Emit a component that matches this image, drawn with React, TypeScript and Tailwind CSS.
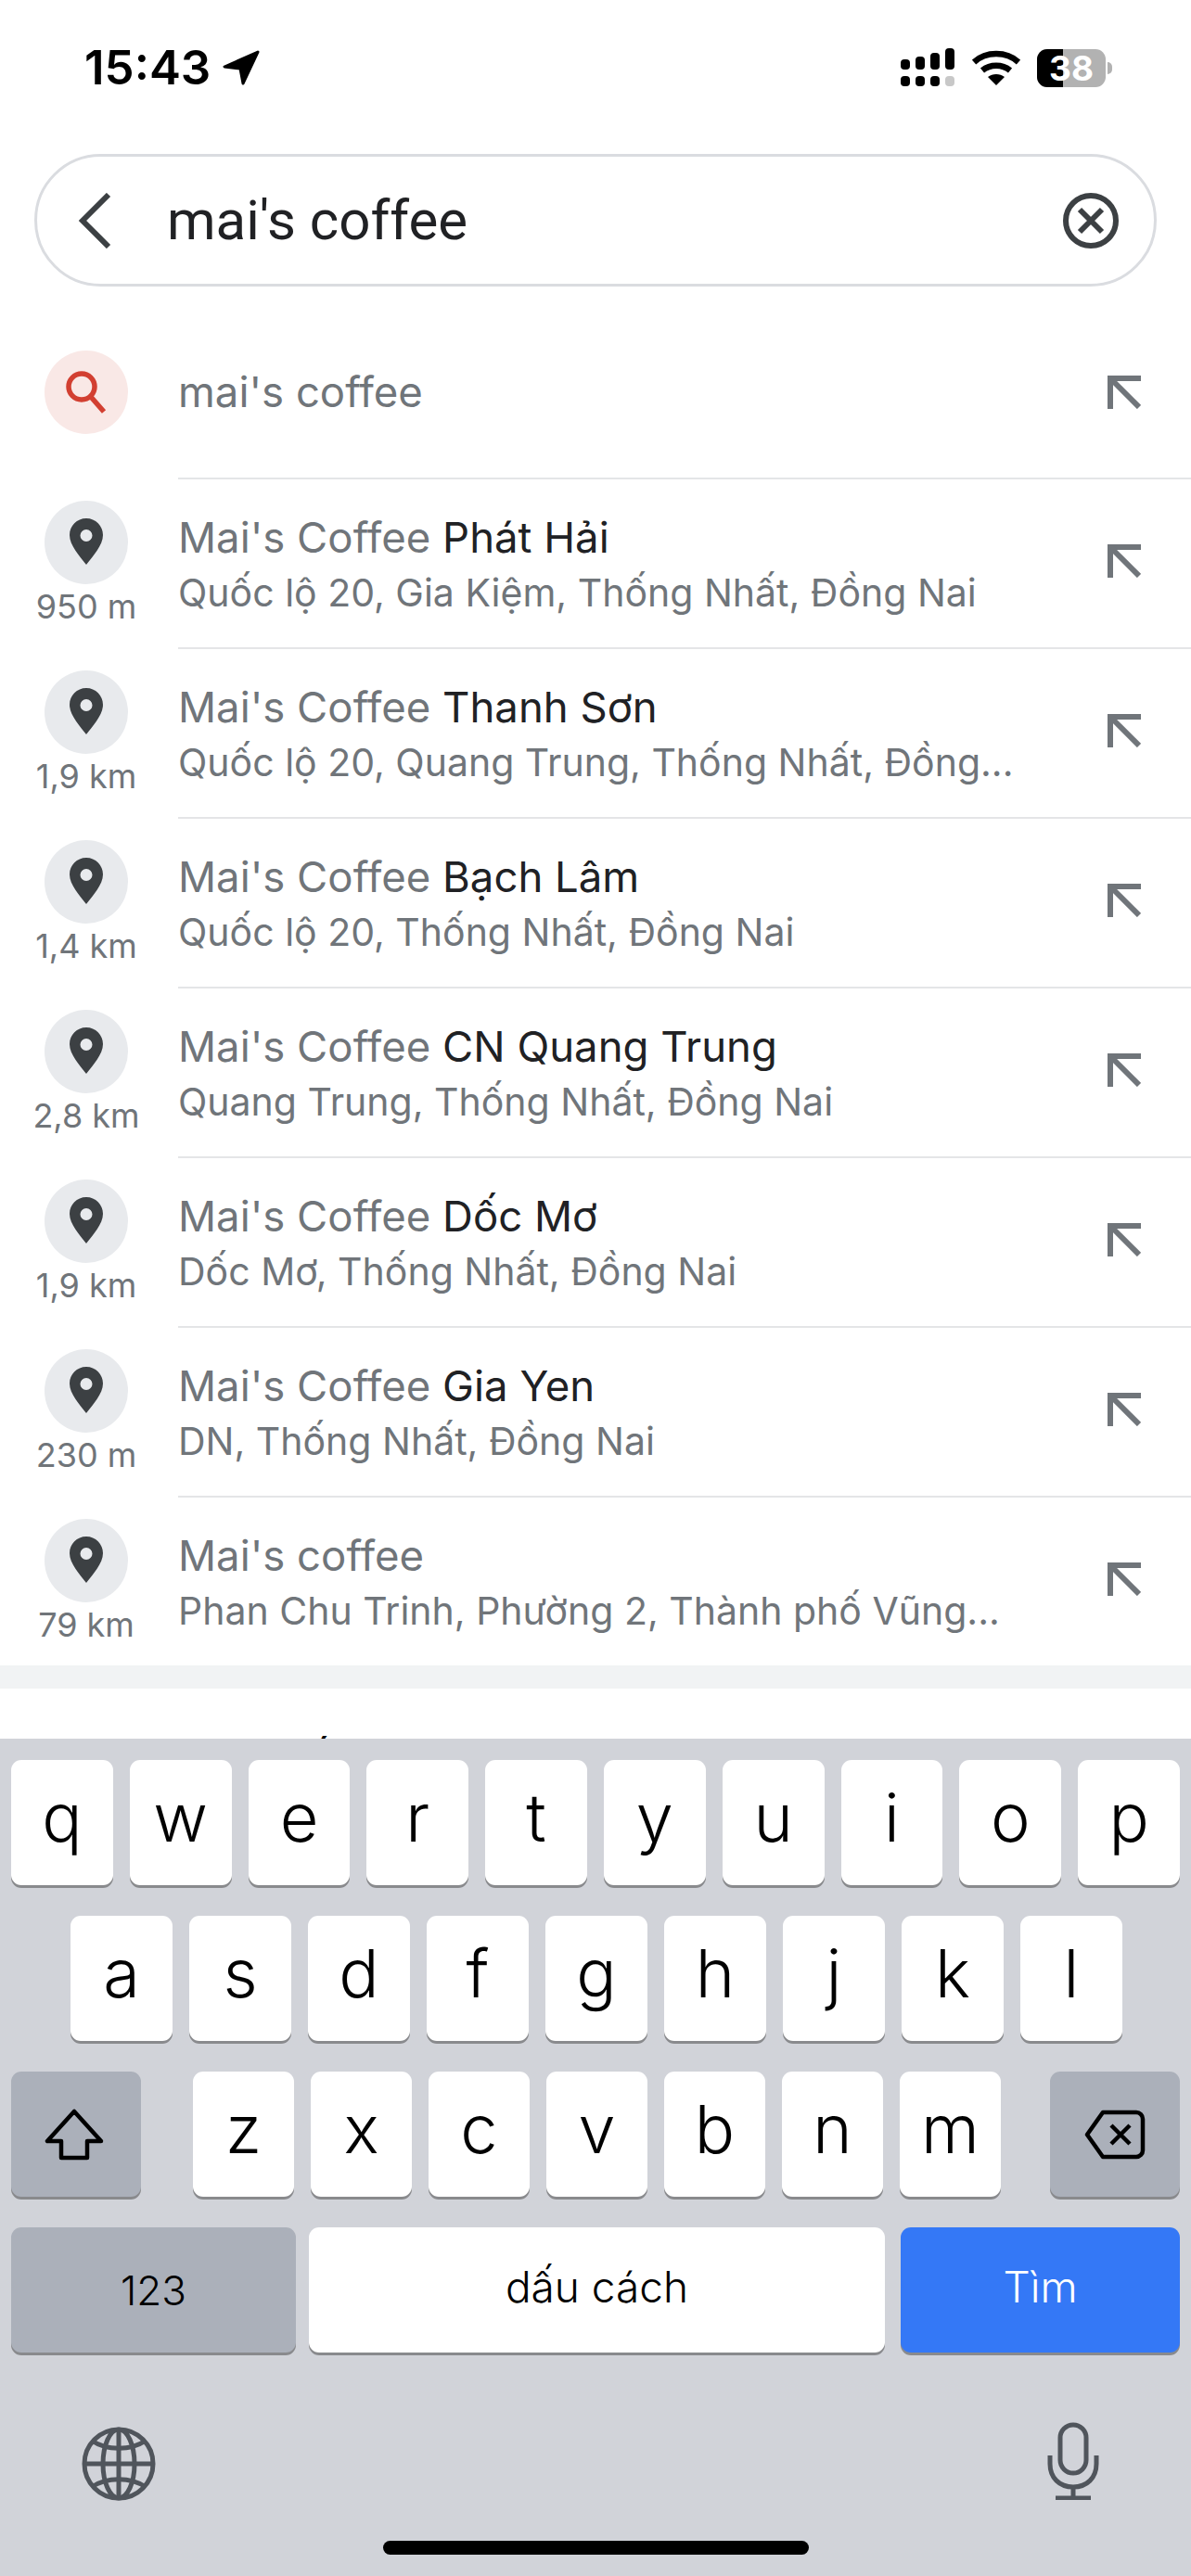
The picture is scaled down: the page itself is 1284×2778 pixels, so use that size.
const results = [
  { name: "Phát Hải", address: "Quốc lộ 20, Gia Kiệm, Thống Nhất, Đồng Nai", distance: "950 m" },
  { name: "Thanh Sơn", address: "Quốc lộ 20, Quang Trung, Thống Nhất, Đồng...", distance: "1,9 km" },
  { name: "Bạch Lâm", address: "Quốc lộ 20, Thống Nhất, Đồng Nai", distance: "1,4 km" },
  { name: "CN Quang Trung", address: "Quang Trung, Thống Nhất, Đồng Nai", distance: "2,8 km" },
  { name: "Dốc Mơ", address: "Dốc Mơ, Thống Nhất, Đồng Nai", distance: "1,9 km" },
  { name: "Gia Yen", address: "DN, Thống Nhất, Đồng Nai", distance: "230 m" },
  { name: "", address: "Phan Chu Trinh, Phường 2, Thành phố Vũng...", distance: "79 km" },
]

const rowOne = ["q", "w", "e", "r", "t", "y", "u", "i", "o", "p"]
const rowTwo = ["a", "s", "d", "f", "g", "h", "j", "k", "l"]
const rowThree = ["z", "x", "c", "v", "b", "n", "m"]

const keyShadow = "shadow-[0_3px_0_#898a8d]"

const FillArrow = () => (
  <svg width="36" height="36" viewBox="0 0 36 36" fill="none" stroke="#70757a" strokeWidth="6">
    <path d="M3 36V3h33" />
    <path d="M4 4l30 30" />
  </svg>
)

const Pin = () => (
  <svg width="36" height="50" viewBox="0 0 36 50">
    <path
      fillRule="evenodd"
      fill="#3c4043"
      d="M18 0C8 0 0 8 0 18c0 11 11 23 18 32 7-9 18-21 18-32C36 8 28 0 18 0Zm0 12a6.5 6.5 0 1 1 0 13 6.5 6.5 0 0 1 0-13Z"
    />
  </svg>
)

const Key = ({ label }: { label: string }) => (
  <div className={`flex h-[135px] flex-1 items-center justify-center rounded-[11px] bg-white pb-[11px] text-[72px] font-light leading-none text-black ${keyShadow}`}>
    {label}
  </div>
)

const StatusBar = () => (
  <div className="flex h-[166px] items-start justify-between pl-[91px] pr-[85px] pt-[44px]">
    <div className="flex items-center gap-[12px]">
      <span className="text-[51px] font-semibold leading-[58px] text-black">15:43</span>
      <svg width="42" height="40" viewBox="0 0 42 40">
        <path d="M39 3 3 19l17 2 3 16Z" fill="#000" stroke="#000" strokeWidth="3" strokeLinejoin="round" />
      </svg>
    </div>
    <div className="flex items-center gap-[18px] pt-[8px]">
      <svg width="60" height="42" viewBox="0 0 60 42">
        <rect x="1" y="12" width="10" height="11" rx="4" fill="#000" />
        <rect x="17" y="9" width="10" height="14" rx="4" fill="#000" />
        <rect x="33" y="5" width="10" height="18" rx="4" fill="#000" />
        <rect x="49" y="0" width="10" height="23" rx="4" fill="#000" />
        <rect x="1" y="30" width="10" height="11" rx="4" fill="#000" />
        <rect x="17" y="30" width="10" height="11" rx="4" fill="#000" />
        <rect x="33" y="30" width="10" height="11" rx="4" fill="#000" />
        <rect x="49" y="30" width="10" height="11" rx="4" fill="#c8c8c8" />
      </svg>
      <svg width="52" height="38" viewBox="0 0 52 38" fill="none">
        <path d="M2 13C15 1 37 1 50 13" stroke="#000" strokeWidth="6.500" />
        <path d="M11 22c8.500-7 21.500-7 30 0" stroke="#000" strokeWidth="6.500" />
        <path d="M26 38 17 29c5-4 13-4 18 0Z" fill="#000" />
      </svg>
      <div className="flex items-center">
        <div className="relative h-[41px] w-[74px] rounded-[11px] bg-[#b2b2b2]">
          <div className="h-full w-[28px] rounded-l-[11px] bg-black" />
          <span className="absolute inset-0 flex items-center justify-center text-[37px] font-bold leading-none text-white">
            38
          </span>
        </div>
        <div className="ml-[2px] h-[13px] w-[5px] rounded-r-full bg-[#b2b2b2]" />
      </div>
    </div>
  </div>
)

const SearchBar = () => (
  <div className="mx-[37px] flex h-[143px] items-center rounded-[72px] border-[3px] border-[#dadce0] bg-white pl-[42px] pr-[38px]">
    <svg width="40" height="60" viewBox="0 0 40 60" fill="none" stroke="#3c4043" strokeWidth="6">
      <path d="M35 2 7 30l28 28" />
    </svg>
    <span className="ml-[58px] flex-1 font-['Roboto',sans-serif] text-[60px] leading-none text-[#202124]">mai's coffee</span>
    <svg width="60" height="60" viewBox="0 0 60 60" fill="none" stroke="#3c4043" strokeWidth="6">
      <circle cx="30" cy="30" r="27" />
      <path d="M18 18l24 24M42 18 18 42" />
    </svg>
  </div>
)

const ResultRow = ({ name, address, distance }: { name: string; address: string; distance: string }) => (
  <div className="flex h-[183px] pl-[48px]">
    <div className="flex w-[90px] shrink-0 flex-col items-center pt-[25px]">
      <div className="flex h-[90px] w-[90px] items-center justify-center rounded-full bg-[#e8eaed] pb-[2px]">
        <Pin />
      </div>
      <span className="mt-[4px] whitespace-nowrap text-[36px] leading-[40px] text-[#70757a]">{distance}</span>
    </div>
    <div className="ml-[54px] flex flex-1 items-start justify-between border-t-2 border-[#e4e5e7] pr-[54px]">
      <div className="pt-[36px]">
        <div className="text-[45.500px] leading-[54px] text-[#70757a]">
          {name === "" ? "Mai's coffee" : "Mai's Coffee"} <span className="text-[#202124]">{name}</span>
        </div>
        <div className="mt-[8px] whitespace-nowrap text-[41px] leading-[48px] text-[#70757a]">{address}</div>
      </div>
      <div className="pt-[70px]">
        <FillArrow />
      </div>
    </div>
  </div>
)

export default function App() {
  return (
    <div className="relative h-[2778px] w-[1284px] overflow-hidden bg-white font-['Inter',sans-serif]">
      <StatusBar />
      <SearchBar />

      <div className="mt-[40px] flex h-[166px] pl-[48px]">
        <div className="mt-[29px] flex h-[90px] w-[90px] shrink-0 items-center justify-center rounded-full bg-[#f9e8e6]">
          <svg width="44" height="46" viewBox="0 0 44 46" fill="none" stroke="#d23f31" strokeWidth="5.500">
            <circle cx="17" cy="17" r="14" />
            <path d="M27 28 41 44" />
          </svg>
        </div>
        <div className="ml-[54px] flex flex-1 justify-between pr-[54px] pt-[47px]">
          <span className="text-[45.500px] leading-[54px] text-[#70757a]">mai's coffee</span>
          <div className="pt-[9px]">
            <FillArrow />
          </div>
        </div>
      </div>

      {results.map((result) => (
        <ResultRow key={result.distance + result.name} {...result} />
      ))}

      <div className="h-[25px] bg-[#f1f3f4]" />

      {/* next section's heading, only the accent shows above the keyboard */}
      <div className="pl-[299px] pt-[49px] text-[46px] leading-[54px] text-black">Kết quả</div>

      <div className="absolute inset-x-0 bottom-0 h-[903px] bg-[#d1d3d9]">
        <div className="flex flex-col gap-[33px] px-[12px] pt-[23px]">
          <div className="flex gap-[18px]">
            {rowOne.map((key) => (
              <Key key={key} label={key} />
            ))}
          </div>
          <div className="flex gap-[18px] pl-[64px] pr-[62px]">
            {rowTwo.map((key) => (
              <Key key={key} label={key} />
            ))}
          </div>
          <div className="flex items-center">
            <div className={`flex h-[135px] w-[140px] items-center justify-center rounded-[11px] bg-[#abb0ba] pr-[4px] ${keyShadow}`}>
              <svg width="64" height="56" viewBox="0 0 64 56" fill="none" stroke="#000" strokeWidth="4.500" strokeLinejoin="round">
                <path d="M32 3 3 35h15v18h28V35h15Z" />
              </svg>
            </div>
            <div className="ml-[56px] flex w-[871px] gap-[18px]">
              {rowThree.map((key) => (
                <Key key={key} label={key} />
              ))}
            </div>
            <div className={`ml-auto flex h-[135px] w-[140px] items-center justify-center rounded-[11px] bg-[#abb0ba] ${keyShadow}`}>
              <svg width="66" height="54" viewBox="0 0 66 54" fill="none" stroke="#000" strokeWidth="4.500" strokeLinejoin="round">
                <path d="M20 3h36a7 7 0 0 1 7 7v34a7 7 0 0 1-7 7H20L3 27Z" />
                <path d="M29 17l20 20M49 17 29 37" />
              </svg>
            </div>
          </div>
          <div className="flex gap-[14px]">
            <div className={`flex h-[135px] w-[307px] items-center justify-center rounded-[11px] bg-[#abb0ba] text-[44px] font-light text-black ${keyShadow}`}>
              123
            </div>
            <div className={`flex h-[135px] flex-1 items-center justify-center rounded-[11px] bg-white pb-[6px] text-[46px] font-light text-black ${keyShadow}`}>
              dấu cách
            </div>
            <div className={`ml-[3px] flex h-[135px] w-[301px] items-center justify-center rounded-[11px] bg-[#3478f6] pb-[6px] text-[46px] font-light text-white ${keyShadow}`}>
              Tìm
            </div>
          </div>
        </div>
        <div className="flex items-start justify-between pl-[88px] pr-[99px] pt-[75px]">
          <svg width="80" height="80" viewBox="0 0 80 80" fill="none" stroke="#50555c" strokeWidth="5" className="mt-[5px]">
            <circle cx="40" cy="40" r="37" />
            <ellipse cx="40" cy="40" rx="17" ry="37" />
            <path d="M3 40h74M40 3v74" />
            <path d="M11 15c16 11 42 11 58 0M11 65c16-11 42-11 58 0" />
          </svg>
          <svg width="56" height="84" viewBox="0 0 56 84" fill="none" stroke="#50555c" strokeWidth="5">
            <rect x="14" y="3" width="28" height="52" rx="14" />
            <path d="M3 36v9c0 15 10 25 25 25s25-10 25-25v-9" />
            <path d="M28 70v12M9 82h38" />
          </svg>
        </div>
        <div className="absolute bottom-[23px] left-[413px] h-[15px] w-[459px] rounded-full bg-black" />
      </div>
    </div>
  )
}
